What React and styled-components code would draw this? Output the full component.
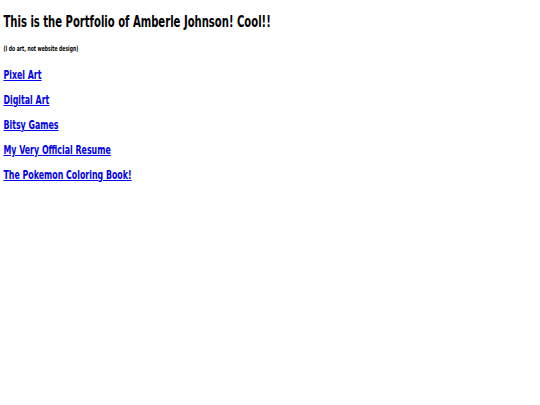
import React from "react";
import styled, { createGlobalStyle } from "styled-components";

const Global = createGlobalStyle`
  html, body { margin: 0; padding: 0; background: #ffffff; }
  body { font-family: "DejaVu Sans Condensed", "DejaVu Sans", sans-serif; }
`;

const Page = styled.main`
  display: flex;
  flex-direction: column;
  align-items: flex-start;
  padding: 13px 5px;
  transform: scaleX(0.69);
  transform-origin: 0 0;
  width: max-content;
`;

const Title = styled.h1`
  margin: 0;
  font-size: 16.2px;
  line-height: 18px;
  font-weight: bold;
  color: #000;
`;

const Note = styled.h6`
  margin: 14px 0 0;
  font-size: 7.3px;
  line-height: 8px;
  font-weight: bold;
  color: #000;
`;

const LinkList = styled.nav`
  display: flex;
  flex-direction: column;
  align-items: flex-start;
  gap: 11px;
  margin-top: 15px;
`;

const LinkHeading = styled.h2`
  margin: 0;
  font-size: 12.7px;
  line-height: 14px;
  font-weight: bold;
`;

const Link = styled.a`
  color: #0000ee;
  text-decoration: underline;
`;

const links = [
  "Pixel Art",
  "Digital Art",
  "Bitsy Games",
  "My Very Official Resume",
  "The Pokemon Coloring Book!",
];

export default function App() {
  return (
    <>
      <Global />
      <Page>
        <Title>This is the Portfolio of Amberle Johnson! Cool!!</Title>
        <Note>(I do art, not website design)</Note>
        <LinkList>
          {links.map((l) => (
            <LinkHeading key={l}>
              <Link href="#">{l}</Link>
            </LinkHeading>
          ))}
        </LinkList>
      </Page>
    </>
  );
}
